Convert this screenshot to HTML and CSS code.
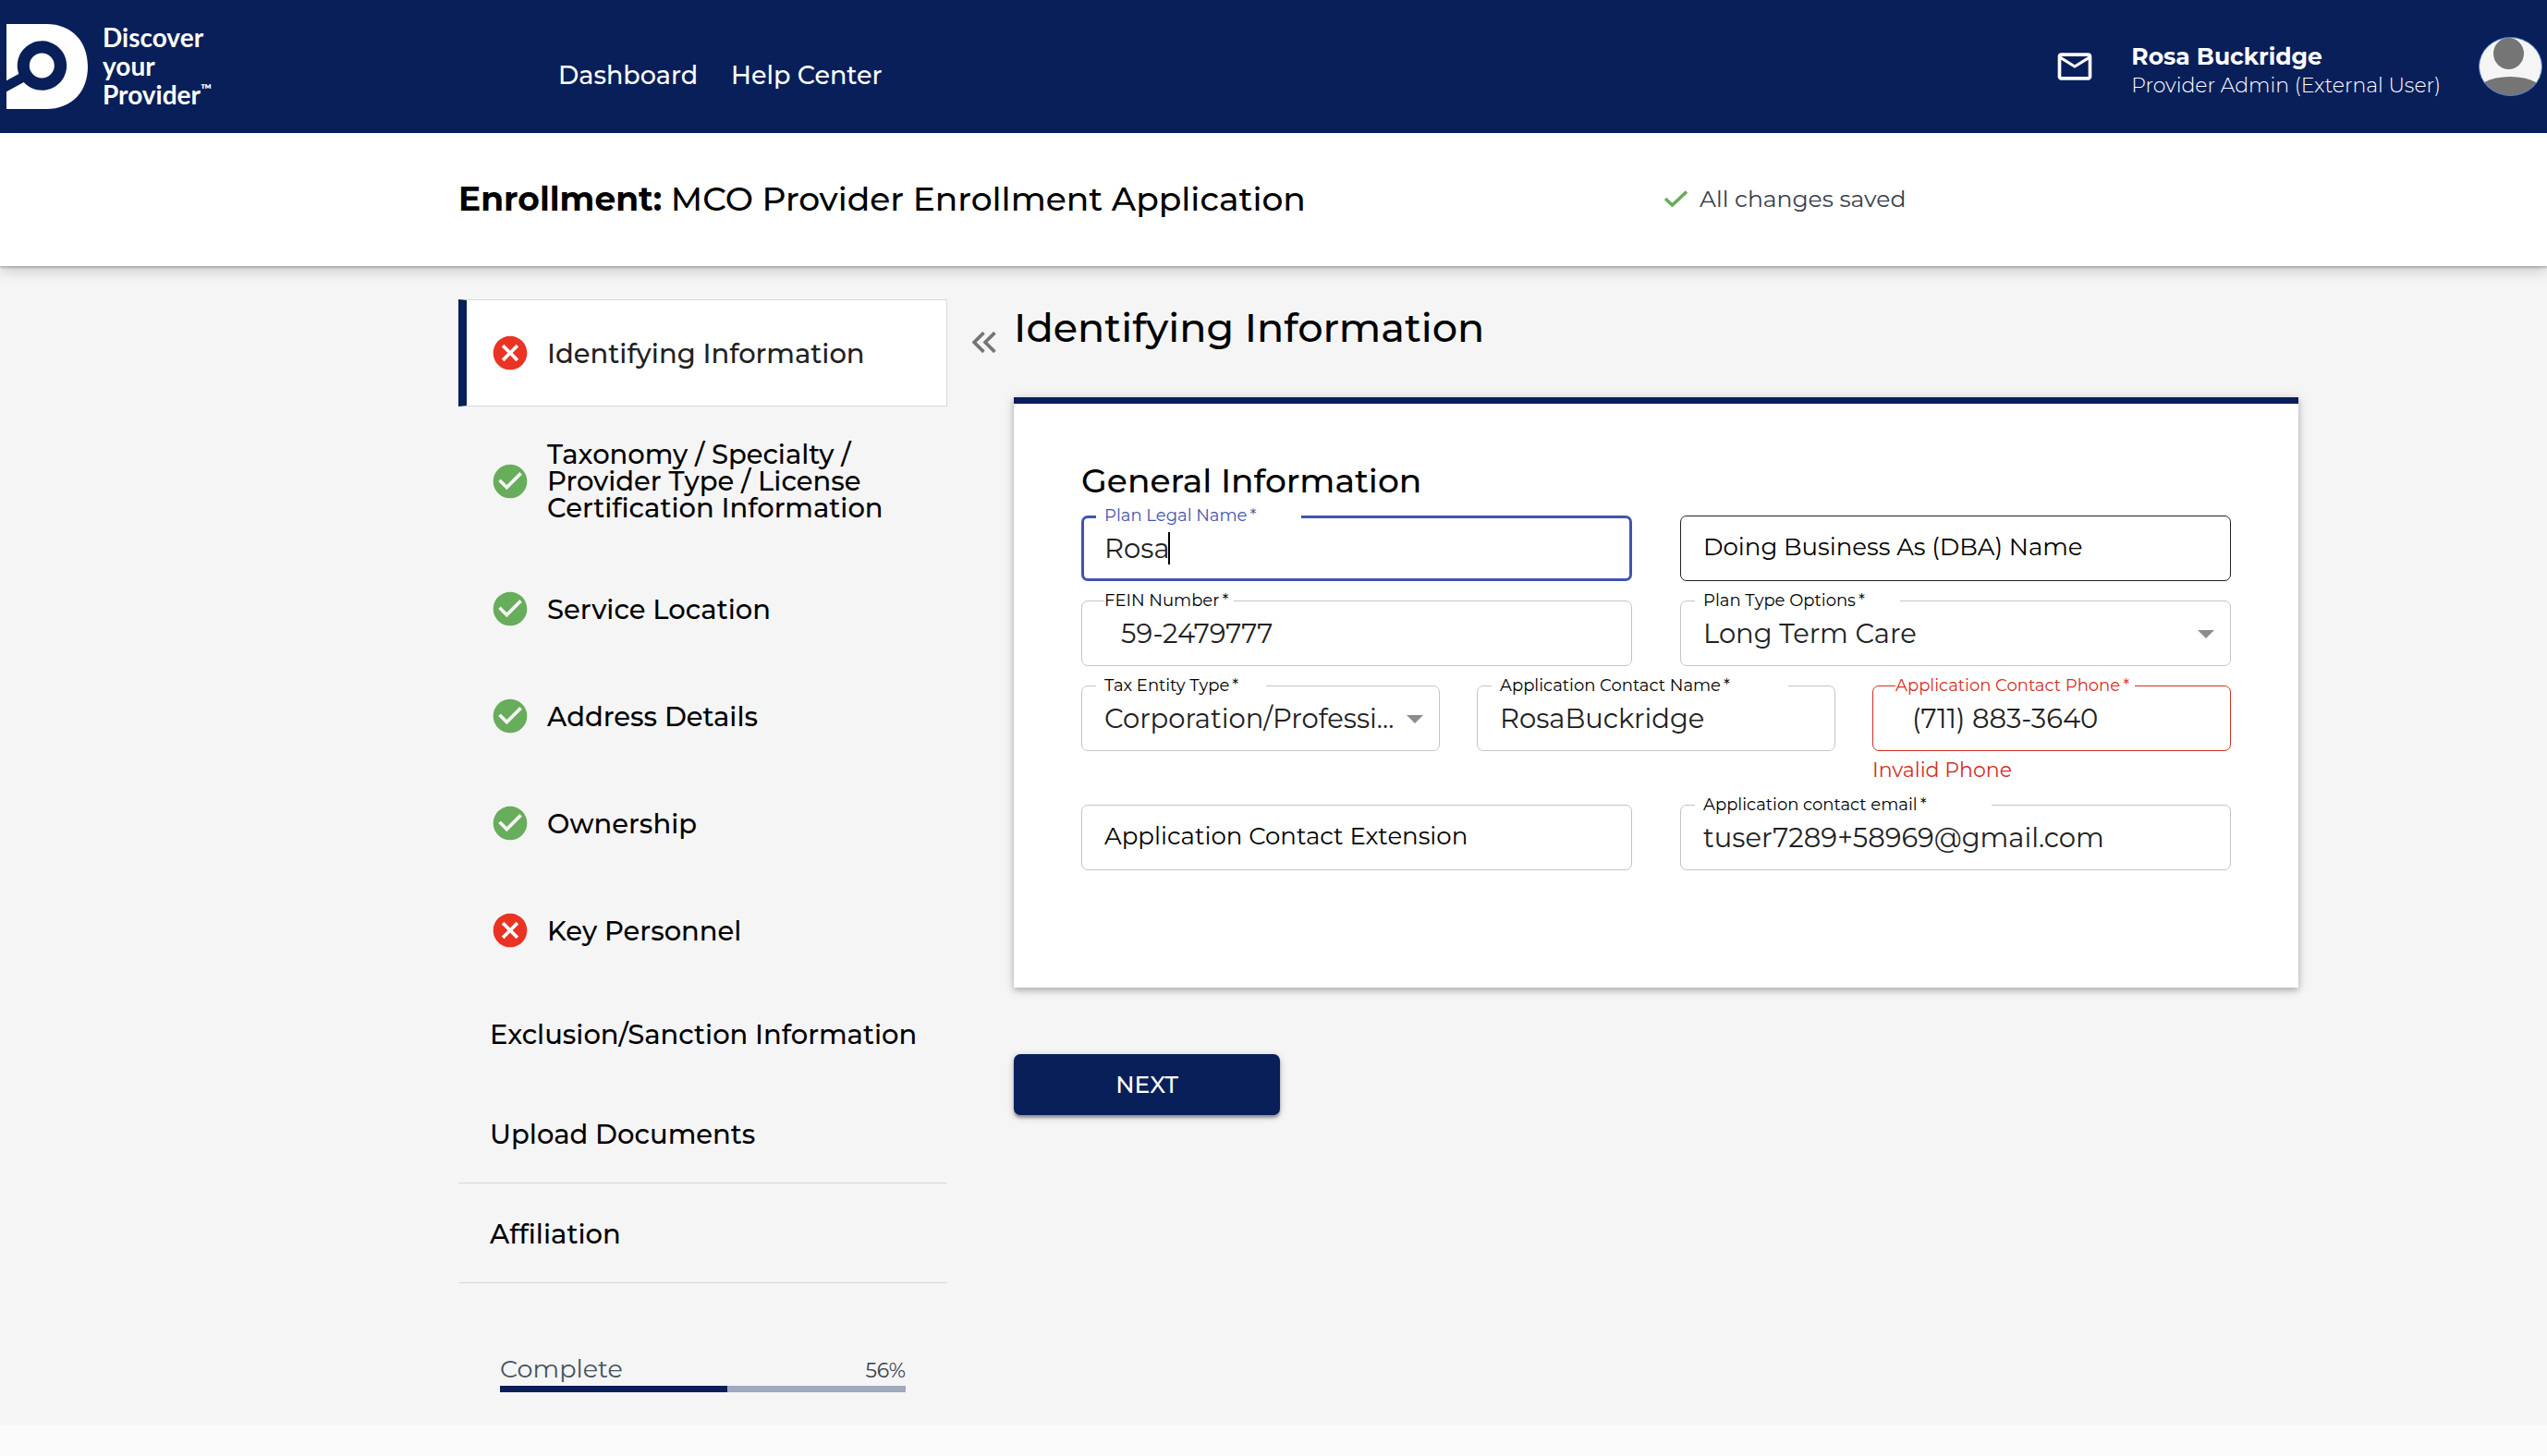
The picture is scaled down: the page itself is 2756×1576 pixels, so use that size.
FILE: index.html
```html
<!DOCTYPE html>
<html lang="en">
<head>
<meta charset="utf-8">
<meta name="viewport" content="width=device-width, initial-scale=1">
<title>MCO Provider Enrollment Application</title>
<link rel="stylesheet" href="styles.css">
</head>
<body>
<svg class="sprite" aria-hidden="true">
  <symbol id="icon-ok" viewBox="0 0 24 24"><path d="M12 2C6.480 2 2 6.480 2 12s4.480 10 10 10 10-4.480 10-10S17.520 2 12 2zm-2 15l-5-5 1.410-1.410L10 14.170l7.590-7.590L19 8l-9 9z"/></symbol>
  <symbol id="icon-error" viewBox="0 0 24 24"><circle cx="12" cy="12" r="9" fill="#fff"/><path d="M12 2C6.470 2 2 6.470 2 12s4.470 10 10 10 10-4.470 10-10S17.530 2 12 2zm5 13.590L15.590 17 12 13.410 8.410 17 7 15.590 10.590 12 7 8.410 8.410 7 12 10.590 15.590 7 17 8.410 13.410 12 17 15.590z"/></symbol>
  <symbol id="icon-arrow" viewBox="0 0 18 9"><path d="M0 0h18L9 9z"/></symbol>
</svg>

<header class="topbar">
  <a class="brand" href="#">
    <svg class="brand-mark" viewBox="0 0 88 92" aria-hidden="true">
      <path fill="#fff" d="M0 0H43C71 0 88 19 88 46S71 92 43 92H0V73.300L18.700 63A26.700 26.700 0 1 0 13.300 54L0 61.300Z"/>
      <circle cx="38.300" cy="45" r="13.500" fill="#fff"/>
    </svg>
    <span class="brand-name">Discover<br>your<br>Provider<sup>™</sup></span>
  </a>
  <nav class="topnav">
    <a href="#">Dashboard</a>
    <a href="#">Help Center</a>
  </nav>
  <div class="account">
    <button class="icon-button" type="button" aria-label="Messages">
      <svg class="mail" viewBox="0 0 24 24" aria-hidden="true"><path d="M22 6c0-1.100-.9-2-2-2H4c-1.100 0-2 .9-2 2v12c0 1.100.9 2 2 2h16c1.100 0 2-.9 2-2V6zm-2 0l-8 5-8-5h16zm0 12H4V8l8 5 8-5v10z"/></svg>
    </button>
    <div class="account-text">
      <strong>Rosa Buckridge</strong>
      <span>Provider Admin (External User)</span>
    </div>
    <svg class="avatar" viewBox="0 0 69 64" role="img" aria-label="Profile picture">
      <defs><clipPath id="avatar-clip"><ellipse cx="34.500" cy="32" rx="34" ry="31.500"/></clipPath></defs>
      <g clip-path="url(#avatar-clip)">
        <rect width="69" height="64" fill="#f5f5f5"/>
        <ellipse cx="32.500" cy="18" rx="16.500" ry="17" fill="#757575"/>
        <ellipse cx="34" cy="64" rx="40" ry="21" fill="#757575"/>
      </g>
      <ellipse cx="34.500" cy="32" rx="34" ry="31.500" fill="none" stroke="#4a7cc7"/>
    </svg>
  </div>
</header>

<div class="titlebar">
  <div class="container titlebar-row">
    <h1 class="page-title"><strong>Enrollment:</strong> MCO Provider Enrollment Application</h1>
    <p class="save-state">
      <svg viewBox="0 0 25 18" aria-hidden="true"><path d="M1 9l7.500 7L24 1.500" fill="none" stroke="#67ad5b" stroke-width="3.600"/></svg>
      All changes saved
    </p>
  </div>
</div>

<div class="content">
  <div class="container columns">
    <aside class="sidebar">
      <nav class="steps" aria-label="Application steps">
        <a class="step step-active" href="#"><svg class="step-icon error"><use href="#icon-error"/></svg><span>Identifying Information</span></a>
        <a class="step" href="#"><svg class="step-icon ok"><use href="#icon-ok"/></svg><span>Taxonomy / Specialty /<br>Provider Type / License<br>Certification Information</span></a>
        <a class="step" href="#"><svg class="step-icon ok"><use href="#icon-ok"/></svg><span>Service Location</span></a>
        <a class="step" href="#"><svg class="step-icon ok"><use href="#icon-ok"/></svg><span>Address Details</span></a>
        <a class="step" href="#"><svg class="step-icon ok"><use href="#icon-ok"/></svg><span>Ownership</span></a>
        <a class="step" href="#"><svg class="step-icon error"><use href="#icon-error"/></svg><span>Key Personnel</span></a>
        <a class="step step-plain" href="#">Exclusion/Sanction Information</a>
        <a class="step step-plain step-ruled" href="#">Upload Documents</a>
        <a class="step step-plain step-ruled" href="#">Affiliation</a>
      </nav>
      <div class="progress">
        <div class="progress-text"><label for="completion">Complete</label><span class="percent">56%</span></div>
        <progress id="completion" max="100" value="56"></progress>
      </div>
    </aside>

    <button class="icon-button collapse" type="button" aria-label="Collapse menu">
      <svg viewBox="0 0 25 22" aria-hidden="true"><path d="M12 1L2 11l10 10M23.500 1l-10 10 10 10" fill="none" stroke="#757575" stroke-width="3.500"/></svg>
    </button>

    <main class="main">
      <h2 class="section-title">Identifying Information</h2>
      <form>
        <section class="card">
          <h3 class="card-title">General Information</h3>
          <div class="rows">
            <div class="row row-two">
              <div class="field field-focused">
                <input id="plan-name" type="text" value="Rosa">
                <label class="notch notch-medium" for="plan-name">Plan Legal Name<i>*</i></label>
                <span class="caret"></span>
              </div>
              <div class="field field-hover">
                <input id="dba" type="text">
                <label class="resting" for="dba">Doing Business As (DBA) Name</label>
              </div>
            </div>
            <div class="row row-two">
              <div class="field field-masked">
                <input id="fein" type="text" value="59-2479777">
                <label class="notch notch-tight" for="fein">FEIN Number<i>*</i></label>
              </div>
              <div class="field">
                <select id="plan-type"><option>Long Term Care</option></select>
                <label class="notch notch-medium" for="plan-type">Plan Type Options<i>*</i></label>
                <svg class="arrow"><use href="#icon-arrow"/></svg>
              </div>
            </div>
            <div class="row row-three">
              <div class="field">
                <select id="entity"><option>Corporation/Professi...</option></select>
                <label class="notch notch-short" for="entity">Tax Entity Type<i>*</i></label>
                <svg class="arrow"><use href="#icon-arrow"/></svg>
              </div>
              <div class="field">
                <input id="contact-name" type="text" value="RosaBuckridge">
                <label class="notch notch-long" for="contact-name">Application Contact Name<i>*</i></label>
              </div>
              <div class="field field-masked field-error">
                <input id="phone" type="tel" value="(711) 883-3640" aria-describedby="phone-error">
                <label class="notch notch-tight" for="phone">Application Contact Phone<i>*</i></label>
                <p class="message" id="phone-error">Invalid Phone</p>
              </div>
            </div>
            <div class="row row-two">
              <div class="field">
                <input id="extension" type="text">
                <label class="resting" for="extension">Application Contact Extension</label>
              </div>
              <div class="field">
                <input id="email" type="email" value="tuser7289+58969@gmail.com">
                <label class="notch notch-long" for="email">Application contact email<i>*</i></label>
              </div>
            </div>
          </div>
        </section>
        <button class="next" type="button">NEXT</button>
      </form>
    </main>
  </div>
</div>
</body>
</html>
```
FILE: styles.css
```css
:root {
  --navy: #081f5a;
  --text-xs: 18px;
  --text-sm: 22px;
  --text-base: 25px;
  --text-md: 26px;
  --text-nav: 27px;
  --text-lg: 29px;
  --text-xl: 36px;
  --text-xxl: 43px;
}

* { box-sizing: border-box; }

body {
  margin: 0;
  background: #fbfbfb;
  color: #000;
  font-family: Montserrat, Inter, sans-serif;
  font-size: var(--text-md);
  font-weight: 400;
}

a { color: inherit; text-decoration: none; }
h1, h2, h3, p { margin: 0; font-weight: 500; }
button, input, select { font: inherit; }
.sprite { position: absolute; width: 0; height: 0; }
.icon-button { padding: 0; border: 0; background: none; line-height: 0; }

.container { margin: 0 269px 0 18%; }

/* Top bar */
.topbar {
  display: flex;
  align-items: center;
  height: 144px;
  padding: 0 5px 0 7px;
  background: var(--navy);
  color: #fff;
}
.brand { display: flex; align-items: center; gap: 16px; width: 597px; }
.brand-mark { width: 88px; height: 92px; }
.brand-name {
  padding-bottom: 2px;
  font-family: Lato, sans-serif;
  font-size: 28px;
  font-weight: 700;
  line-height: 31px;
}
.brand-name sup { font-size: 16px; line-height: 0; }
.topnav { display: flex; gap: 36px; padding-top: 19px; font-size: var(--text-nav); font-weight: 500; }
.account { display: flex; align-items: center; margin-left: auto; }
.mail { width: 44px; height: 44px; fill: #fff; }
.account-text {
  display: flex;
  flex-direction: column;
  margin: 9px 41px 0 39px;
  line-height: 31px;
}
.account-text strong { font-size: var(--text-base); font-weight: 700; }
.account-text span { font-size: var(--text-sm); font-weight: 300; }
.avatar { width: 69px; height: 64px; }

/* Title bar */
.titlebar {
  position: relative;
  background: #fff;
  box-shadow: 0 2px 2px rgba(0, 0, 0, .2), 0 4px 16px rgba(0, 0, 0, .2);
}
.titlebar-row { display: flex; align-items: center; height: 144px; padding-bottom: 2px; }
.page-title { flex: 0 0 1305px; font-size: var(--text-xl); }
.page-title strong { font-weight: 700; }
.save-state { display: flex; align-items: center; gap: 13px; color: #37404a; font-size: var(--text-base); font-weight: 400; }
.save-state svg { width: 25px; height: 18px; }

/* Page body */
.content { background: #f5f5f5; padding: 36px 0 35px; }
.columns { display: flex; align-items: flex-start; }
.sidebar { flex: 0 0 529px; }

.step {
  display: flex;
  align-items: center;
  gap: 18px;
  padding: 36px 0 36px 33px;
  border: 1px solid transparent;
  font-size: var(--text-lg);
  font-weight: 500;
  line-height: 29px;
}
.step-active {
  padding-left: 25px;
  background: #fff;
  border-color: #d8d8d8;
  border-left: 9px solid var(--navy);
  color: #212121;
}
.step-plain { min-height: 108px; }
.step-ruled { border-bottom-color: #d4d6d6; }
.step-icon { flex: none; width: 44px; height: 44px; margin: -1px 0; }
.ok { fill: #67ad5b; }
.error { fill: #ea3323; }

.progress { margin: 75px 45px 0; }
.progress-text {
  display: flex;
  align-items: baseline;
  justify-content: space-between;
  color: #45545e;
  font-size: var(--text-nav);
  line-height: 36px;
}
.percent { color: #37404a; font-size: var(--text-sm); line-height: 30px; }
progress {
  display: block;
  appearance: none;
  width: 100%;
  height: 7px;
  border: 0;
  background: #9fa9bf;
}
progress::-webkit-progress-bar { background: #9fa9bf; }
progress::-webkit-progress-value { background: var(--navy); }
progress::-moz-progress-bar { background: var(--navy); }

.collapse { flex: 0 0 72px; padding: 35px 19px 0 27px; }
.collapse svg { width: 26px; height: 23px; }

.main { flex: 1; min-width: 0; }
.section-title { margin-bottom: 44px; font-size: var(--text-xxl); line-height: 62px; }
.card {
  padding: 61px 73px 127px;
  background: #fff;
  border-top: 7px solid var(--navy);
  box-shadow: 0 3px 6px rgba(0, 0, 0, .2), 0 2px 12px rgba(0, 0, 0, .16);
}
.card-title { margin-bottom: 16px; font-size: var(--text-xl); line-height: 44px; }

/* Form */
.rows { display: flex; flex-direction: column; gap: 21px; }
.row { display: grid; align-items: start; }
.row-two { grid-template-columns: repeat(2, 1fr); gap: 52px; }
.row-three { grid-template-columns: repeat(3, 1fr); gap: 40px; }
.field { position: relative; }
.field input, .field select {
  display: block;
  appearance: none;
  width: 100%;
  height: 71px;
  padding: 0 24px;
  border: 1px solid #c4c4c4;
  border-radius: 7px;
  outline: 0;
  background: #fff;
  color: #212121;
  font-size: var(--text-lg);
  font-weight: 400;
}
.field-focused input { padding: 0 22px; border: 3px solid #4253ae; }
.field-hover input { border-color: #212121; }
.field-masked input { padding: 0 42px 1px; }
.field-error input { border-color: #d32f24; }
.notch {
  position: absolute;
  top: -11px;
  left: 16px;
  padding-left: 9px;
  background: #fff;
  font-size: var(--text-xs);
  line-height: 22px;
  white-space: nowrap;
}
.notch i { margin-left: 3px; font-style: normal; }
.notch-short { width: 184px; }
.notch-medium { width: 222px; }
.notch-long { width: 321px; }
.notch-tight { left: 25px; padding: 0 6px 0 0; }
.field-focused .notch { color: #4253ae; }
.field-error .notch, .message { color: #d32f24; }
.resting { position: absolute; top: 18px; left: 25px; line-height: 33px; }
.message { margin: 6px 0 1px; font-size: var(--text-sm); font-weight: 400; line-height: 30px; }
.arrow { position: absolute; top: 32px; right: 18px; width: 18px; height: 9px; fill: #8c8c8c; pointer-events: none; }
.caret { position: absolute; top: 18px; left: 94px; width: 2px; height: 35px; background: #000; }

.next {
  display: block;
  width: 288px;
  height: 66px;
  margin-top: 72px;
  border: 0;
  border-radius: 7px;
  background: var(--navy);
  box-shadow: 0 3px 3px rgba(0, 0, 0, .3), 0 2px 8px rgba(0, 0, 0, .2);
  color: #fff;
  font-size: var(--text-base);
  font-weight: 500;
}
```
